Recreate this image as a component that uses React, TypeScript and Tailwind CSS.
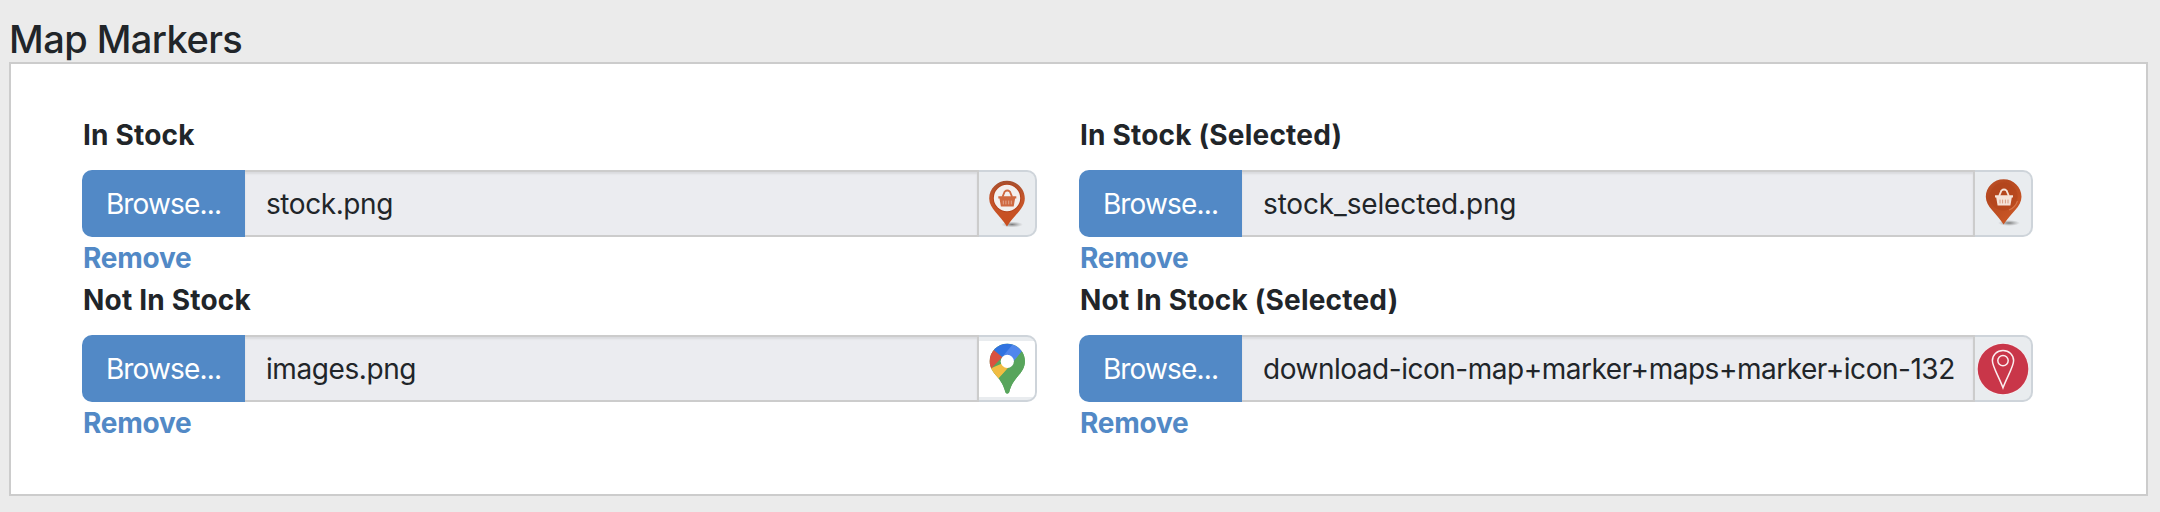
import type { ReactNode } from "react";

const BASKET = (
  <>
    <path d="M-4.8 -2.2 L-2.6 -7.4 Q0 -9.6 2.6 -7.4 L4.8 -2.2" fill="none" strokeWidth="1.8" stroke="currentColor" />
    <path d="M-9 -2.8 H9 V-0.4 H7.8 L6.4 7.6 H-6.4 L-7.8 -0.4 H-9 Z" fill="currentColor" />
  </>
);

const StockMarker = () => (
  <svg viewBox="0 0 56 63" className="h-[63px] w-14">
    <defs>
      <linearGradient id="stockPin" x1="0" y1="0" x2="0" y2="1">
        <stop offset="0" stopColor="#a5502f" />
        <stop offset="0.35" stopColor="#c4552b" />
        <stop offset="1" stopColor="#c94f1f" />
      </linearGradient>
      <radialGradient id="stockShadow">
        <stop offset="0" stopColor="#555" stopOpacity="0.75" />
        <stop offset="1" stopColor="#888" stopOpacity="0" />
      </radialGradient>
    </defs>
    <ellipse cx="33" cy="52.5" rx="11" ry="3" fill="url(#stockShadow)" />
    <path
      d="M28 8.8C37.8 8.8 45.8 16.6 45.8 26.4C45.8 36.5 35 43 28 54.6C21 43 10.2 36.5 10.2 26.4C10.2 16.6 18.2 8.8 28 8.8Z"
      fill="url(#stockPin)"
    />
    <circle cx="28" cy="26" r="14.2" fill="#b4431b" />
    <circle cx="28" cy="26" r="13.2" fill="#f3f0ee" />
    <g transform="translate(28.3 27)" className="text-[#cf6940]">
      {BASKET}
      <path d="M-4 1.6V5.4M-1.4 1.6V5.4M1.4 1.6V5.4M4 1.6V5.4" stroke="#e3a68c" strokeWidth="1" />
    </g>
  </svg>
);

const StockSelectedMarker = () => (
  <svg viewBox="0 0 56 63" className="h-[63px] w-14">
    <defs>
      <linearGradient id="selectedPin" x1="0.1" y1="0" x2="0.8" y2="0.9">
        <stop offset="0" stopColor="#bd5128" />
        <stop offset="0.3" stopColor="#b5481f" />
        <stop offset="1" stopColor="#cc5826" />
      </linearGradient>
      <radialGradient id="selectedShadow">
        <stop offset="0" stopColor="#555" stopOpacity="0.75" />
        <stop offset="1" stopColor="#888" stopOpacity="0" />
      </radialGradient>
    </defs>
    <ellipse cx="34" cy="51" rx="11" ry="3" fill="url(#selectedShadow)" />
    <path
      d="M28.6 7.2C38.5 7.2 46.5 15 46.5 24.8C46.5 34.9 35.8 41 28.6 52.6C21.5 41 10.8 34.9 10.8 24.8C10.8 15 18.7 7.2 28.6 7.2Z"
      fill="url(#selectedPin)"
    />
    <circle cx="28.6" cy="24.6" r="14" fill="#b0441c" fillOpacity="0.55" />
    <path d="M42.5 29A14.5 14.5 0 0 1 34 38" fill="none" stroke="#d6774b" strokeWidth="1.1" />
    <g transform="translate(29 26)" className="text-[#f5e3d9]">
      {BASKET}
      <path d="M-4 1.6V5.4M-1.4 1.6V5.4M1.4 1.6V5.4M4 1.6V5.4" stroke="#d99c80" strokeWidth="1" />
    </g>
  </svg>
);

const MapsMarker = () => (
  <svg viewBox="0 0 56 63" className="h-[63px] w-14">
    <defs>
      <clipPath id="mapsPin">
        <path d="M28.3 6.8C38 6.8 45.9 14.5 45.9 24.2C45.9 30.5 43 34.5 38.2 40C33.2 46 31.7 50 30.4 54.5C29.8 57.2 26.8 57.2 26.2 54.5C24.9 50 23.4 46 18.4 40C13.6 34.5 10.7 30.5 10.7 24.2C10.7 14.5 18.6 6.8 28.3 6.8Z" />
      </clipPath>
    </defs>
    <rect y="4" width="56" height="56" fill="#fff" />
    <g clipPath="url(#mapsPin)">
      <rect width="56" height="63" fill="#58a55c" />
      <path d="M0 51.5L12 31.2L28.3 24.3L33.5 27L21.5 39.2L14 48Z" fill="#f1bd42" />
      <path d="M0 8L14.8 12.8L23.4 20L12 31.8L0 44Z" fill="#d95140" />
      <path d="M14.8 12.9L20 0H38L35 9L23.2 20.1Z" fill="#3072e0" />
      <path d="M33.2 8L36 0H56V13L43.6 13.6L33 28L23.2 20Z" fill="#5086ec" />
      <path d="M43.8 13.2L56 13V63H24L20.8 40.4Z" fill="#58a55c" />
    </g>
    <circle cx="28.3" cy="24.3" r="6.6" fill="#fff" />
  </svg>
);

const OutlineMarker = () => (
  <svg viewBox="0 0 56 63" className="h-[63px] w-14">
    <circle cx="28" cy="32" r="26" fill="#f6eef0" />
    <circle cx="28" cy="32" r="25.3" fill="#c93649" />
    <g fill="none" stroke="#fbeef0" strokeWidth="1.5">
      <path d="M28 13.6C34.2 13.6 38.6 18 38.6 23.8C38.6 29.6 32.2 39.5 28 50.8C23.8 39.5 17.4 29.6 17.4 23.8C17.4 18 21.8 13.6 28 13.6Z" />
      <circle cx="28" cy="23.6" r="5.2" />
    </g>
  </svg>
);

type MarkerFieldProps = {
  label: string;
  fileName: string;
  icon: ReactNode;
  nameClass?: string;
};

const MarkerField = ({ label, fileName, icon, nameClass = "tracking-[-0.42px]" }: MarkerFieldProps) => (
  <div>
    <label className="mb-3.5 block pl-px font-bold tracking-[0.2px]">{label}</label>
    <div className="flex h-[67px]">
      <button
        type="button"
        className="w-[163px] shrink-0 rounded-l-[10px] bg-[#5289c6] text-white tracking-[-0.85px]"
      >
        Browse...
      </button>
      <div className="flex min-w-0 flex-1 items-center overflow-hidden border-y-2 border-r-2 border-[#ccc] bg-[#ebecf0] pl-[21px] whitespace-nowrap shadow-[inset_0_2px_2px_rgba(0,0,0,0.075)]">
        <span className={nameClass}>{fileName}</span>
      </div>
      <div className="w-[58px] shrink-0 overflow-hidden rounded-r-[10px] border-y-2 border-r-2 border-[#ced4da] bg-[#e9ecef]">
        {icon}
      </div>
    </div>
    <a href="#" className="block w-fit pl-px font-bold tracking-[-0.25px] text-[#5289c6]">
      Remove
    </a>
  </div>
);

const App = () => {
  return (
    <div className="h-[512px] bg-[#ebebeb] pt-4 pr-3 pl-[9px] font-[Inter,sans-serif] text-[28px] leading-[42px] text-[#212529]">
      <h3 className="h-[46px] text-[38px] leading-[46px] font-medium tracking-[-0.55px]">Map Markers</h3>
      <section className="grid h-[434px] grid-cols-[955px_954px] content-start gap-x-[42px] border-2 border-[#ccc] bg-white pt-[50px] pl-[71px]">
        <MarkerField label="In Stock" fileName="stock.png" icon={<StockMarker />} />
        <MarkerField
          label="In Stock (Selected)"
          fileName="stock_selected.png"
          icon={<StockSelectedMarker />}
          nameClass="tracking-[-0.15px]"
        />
        <MarkerField label="Not In Stock" fileName="images.png" icon={<MapsMarker />} />
        <MarkerField
          label="Not In Stock (Selected)"
          fileName="download-icon-map+marker+maps+marker+icon-132"
          icon={<OutlineMarker />}
          nameClass="tracking-[-0.48px]"
        />
      </section>
    </div>
  );
};

export default App;
